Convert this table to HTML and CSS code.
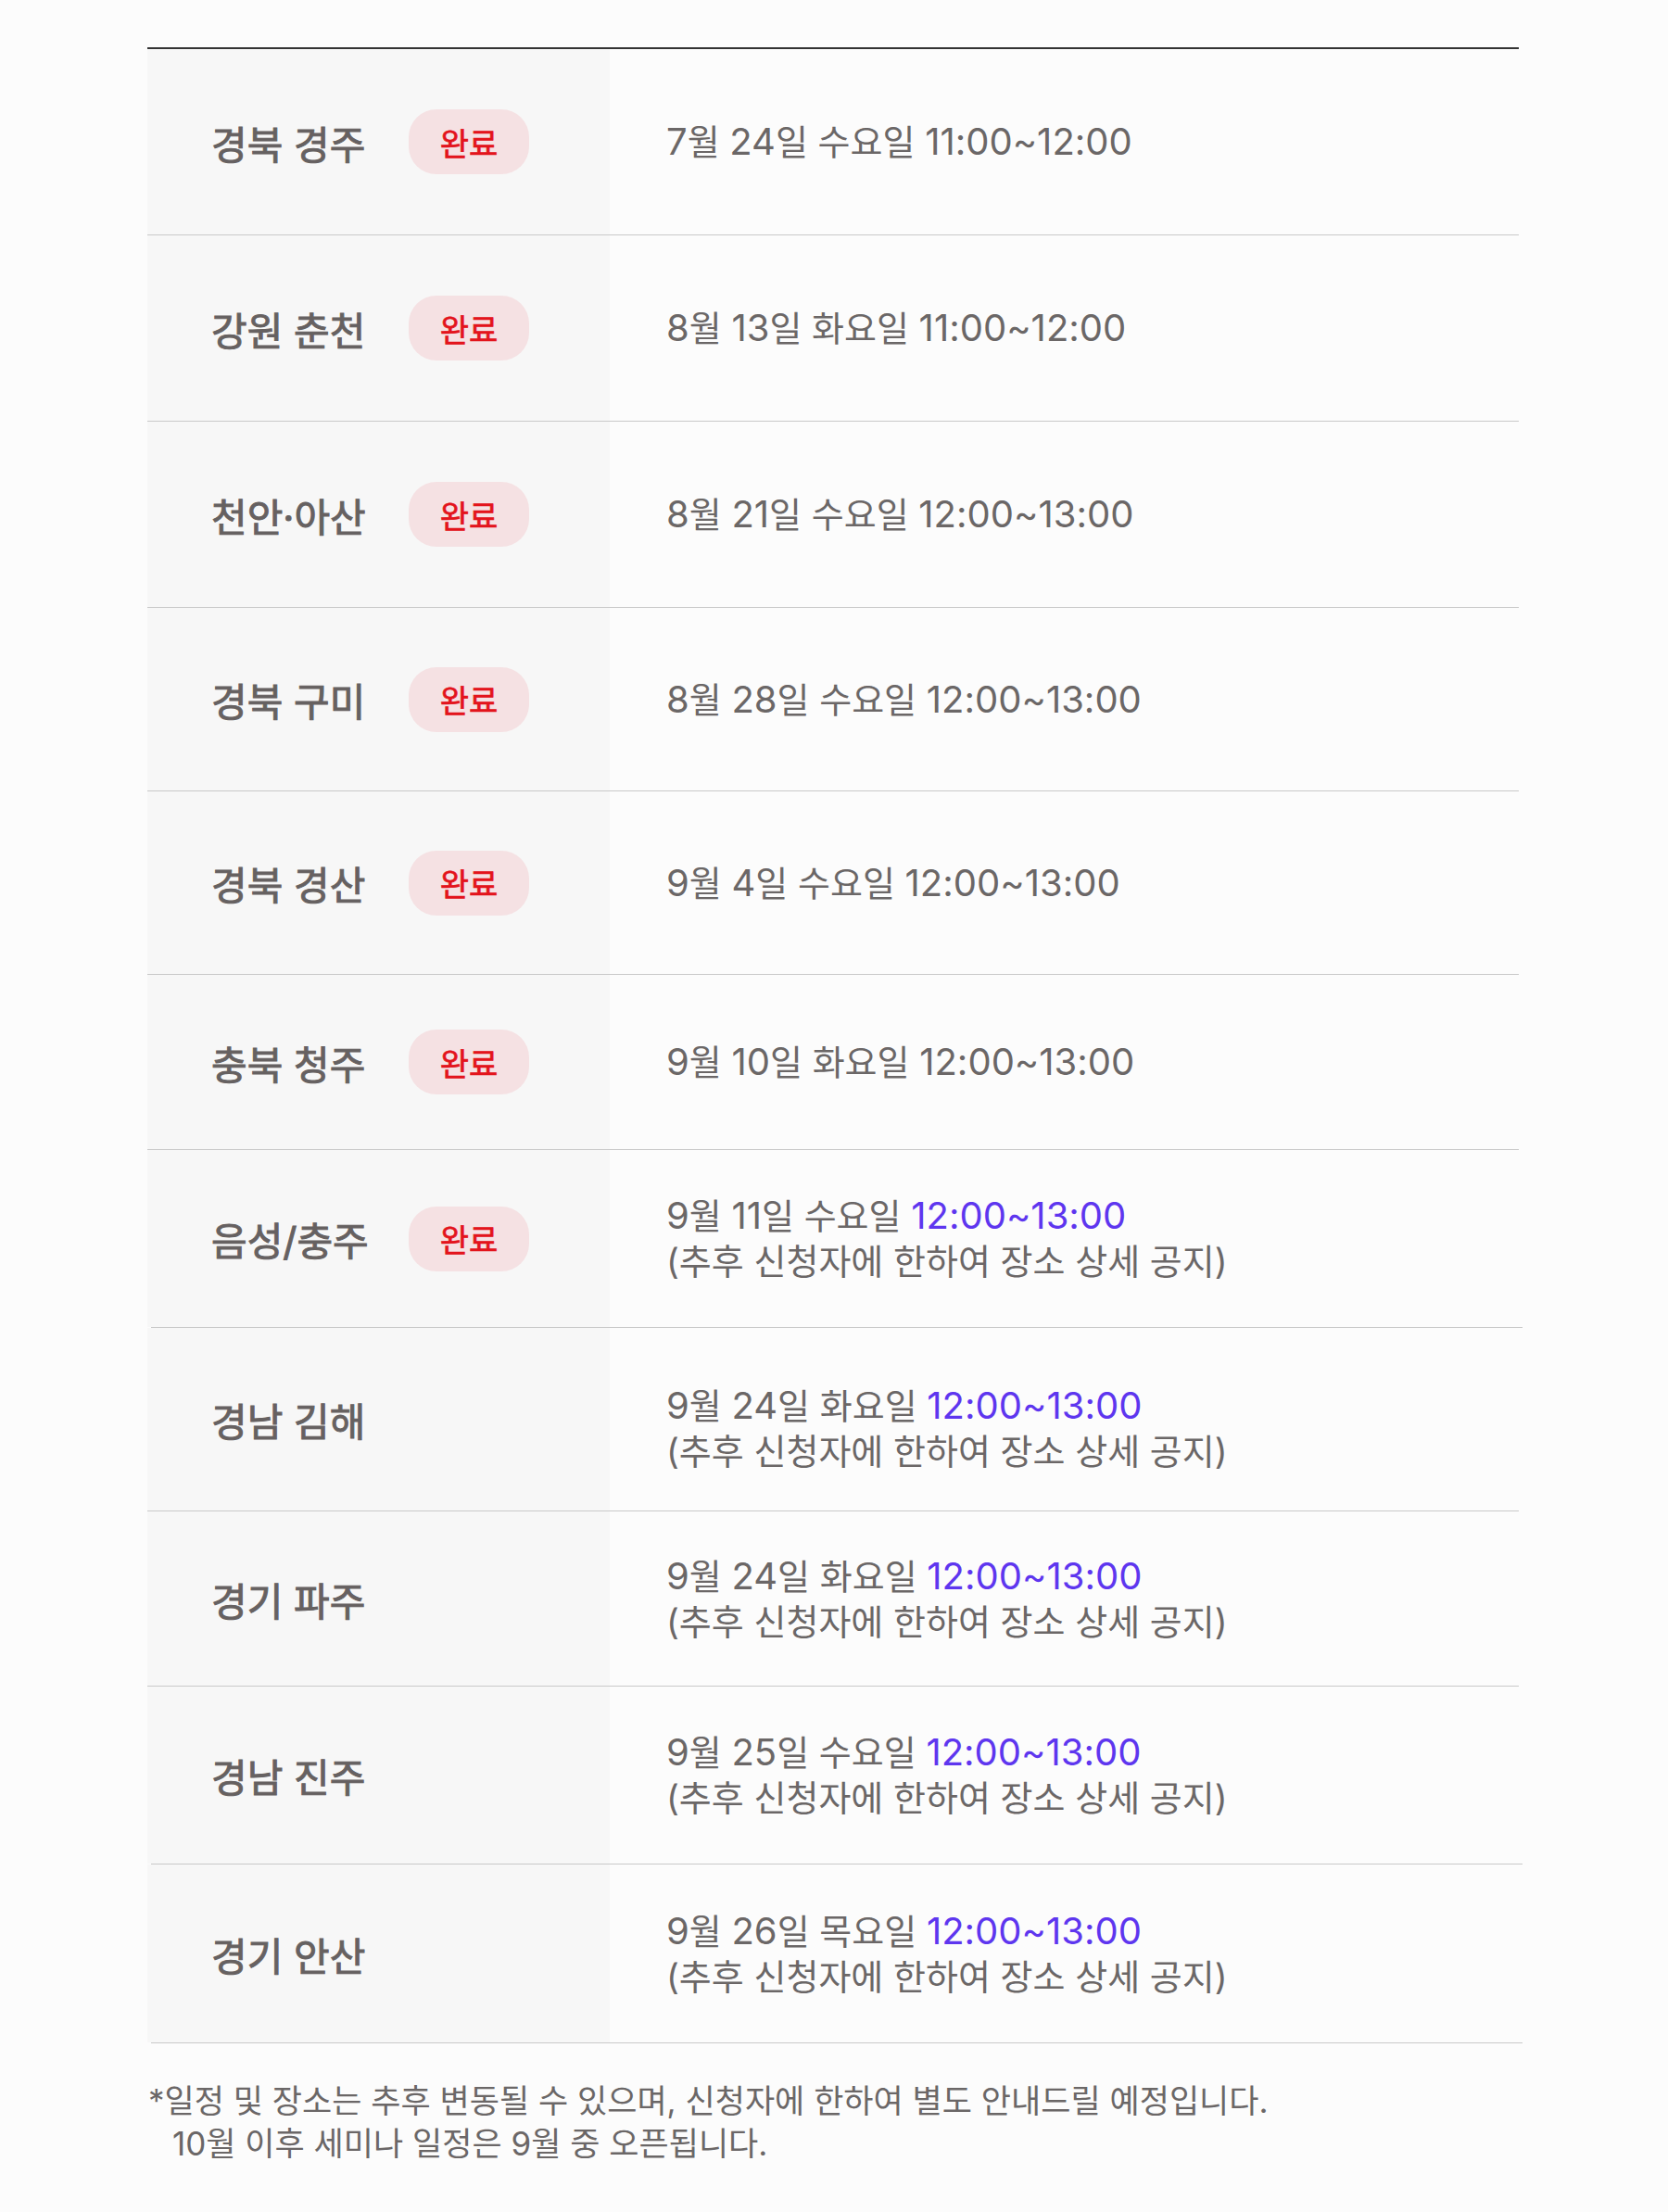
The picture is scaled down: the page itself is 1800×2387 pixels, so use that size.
FILE: index.html
```html
<!DOCTYPE html>
<html lang="ko">
<head>
<meta charset="utf-8">
<title>세미나 일정</title>
<link rel="stylesheet" href="styles.css">
</head>
<body>
<div class="page">
  <div class="table">
    <div class="row r1">
      <div class="place"><span class="name">경북 경주</span><span class="badge">완료</span></div>
      <div class="date"><p><span class="n">7</span>월 <span class="n">24</span>일 수요일 <span class="n">11:00~12:00</span></p></div>
    </div>
    <div class="row r2">
      <div class="place"><span class="name">강원 춘천</span><span class="badge">완료</span></div>
      <div class="date"><p><span class="n">8</span>월 <span class="n">13</span>일 화요일 <span class="n">11:00~12:00</span></p></div>
    </div>
    <div class="row r3">
      <div class="place"><span class="name">천안·아산</span><span class="badge">완료</span></div>
      <div class="date"><p><span class="n">8</span>월 <span class="n">21</span>일 수요일 <span class="n">12:00~13:00</span></p></div>
    </div>
    <div class="row r4">
      <div class="place"><span class="name">경북 구미</span><span class="badge">완료</span></div>
      <div class="date"><p><span class="n">8</span>월 <span class="n">28</span>일 수요일 <span class="n">12:00~13:00</span></p></div>
    </div>
    <div class="row r5">
      <div class="place"><span class="name">경북 경산</span><span class="badge">완료</span></div>
      <div class="date"><p><span class="n">9</span>월 <span class="n">4</span>일 수요일 <span class="n">12:00~13:00</span></p></div>
    </div>
    <div class="row r6">
      <div class="place"><span class="name">충북 청주</span><span class="badge">완료</span></div>
      <div class="date"><p><span class="n">9</span>월 <span class="n">10</span>일 화요일 <span class="n">12:00~13:00</span></p></div>
    </div>
    <div class="row r7 shifted">
      <div class="place"><span class="name">음성/충주</span><span class="badge">완료</span></div>
      <div class="date"><p><span class="n">9</span>월 <span class="n">11</span>일 수요일 <span class="n time">12:00~13:00</span></p><p>(추후 신청자에 한하여 장소 상세 공지)</p></div>
    </div>
    <div class="row r8">
      <div class="place"><span class="name">경남 김해</span></div>
      <div class="date lowered"><p><span class="n">9</span>월 <span class="n">24</span>일 화요일 <span class="n time">12:00~13:00</span></p><p>(추후 신청자에 한하여 장소 상세 공지)</p></div>
    </div>
    <div class="row r9">
      <div class="place"><span class="name">경기 파주</span></div>
      <div class="date"><p><span class="n">9</span>월 <span class="n">24</span>일 화요일 <span class="n time">12:00~13:00</span></p><p>(추후 신청자에 한하여 장소 상세 공지)</p></div>
    </div>
    <div class="row r10 shifted">
      <div class="place"><span class="name">경남 진주</span></div>
      <div class="date"><p><span class="n">9</span>월 <span class="n">25</span>일 수요일 <span class="n time">12:00~13:00</span></p><p>(추후 신청자에 한하여 장소 상세 공지)</p></div>
    </div>
    <div class="row r11 shifted">
      <div class="place"><span class="name">경기 안산</span></div>
      <div class="date"><p><span class="n">9</span>월 <span class="n">26</span>일 목요일 <span class="n time">12:00~13:00</span></p><p>(추후 신청자에 한하여 장소 상세 공지)</p></div>
    </div>
  </div>
  <div class="note">
    <p>*일정 및 장소는 추후 변동될 수 있으며, 신청자에 한하여 별도 안내드릴 예정입니다.</p>
    <p class="indent">10월 이후 세미나 일정은 9월 중 오픈됩니다.</p>
  </div>
</div>
</body>
</html>
```

FILE: styles.css
```css
html, body {
  margin: 0;
  padding: 0;
  background: #fcfcfc;
}

body {
  font-family: "Inter", "Noto Sans CJK KR", sans-serif;
  color: #6b6767;
}

p {
  margin: 0;
}

.page {
  padding: 51px 161px 0 159px;
}

.table {
  border-top: 2px solid #333333;
}

.row {
  display: flex;
  position: relative;
  border-bottom: 1px solid #c9c9c9;
}

.row.shifted {
  border-bottom-color: transparent;
}

.row.shifted::after {
  content: "";
  position: absolute;
  left: 4px;
  right: -4px;
  bottom: -1px;
  height: 1px;
  background: #c9c9c9;
}

.r1, .r2, .r3 { height: 200px; }
.r4, .r5, .r8 { height: 197px; }
.r6, .r9 { height: 188px; }
.r7, .r10 { height: 191px; }
.r11 { height: 192px; }

.place {
  width: 430px;
  flex: none;
  background: #f7f7f7;
  display: flex;
  align-items: center;
  padding-left: 69px;
}

.name {
  width: 213px;
  flex: none;
  font-size: 42px;
  font-weight: 400;
  color: #666161;
  -webkit-text-stroke: 1px #666161;
  white-space: nowrap;
}

.badge {
  width: 130px;
  height: 70px;
  border-radius: 30px;
  background: #f5e1e3;
  color: #e3141c;
  font-size: 34px;
  font-weight: 400;
  -webkit-text-stroke: 0.7px #e3141c;
  display: flex;
  align-items: center;
  justify-content: center;
}

.date {
  flex: 1;
  display: flex;
  flex-direction: column;
  justify-content: center;
  padding-left: 61px;
  font-size: 38px;
  line-height: 49px;
  font-weight: 400;
}

.date.lowered {
  padding-top: 20px;
}

.n {
  font-size: 40px;
}

.time {
  color: #5e36ef;
}

.note {
  padding-top: 39px;
  font-size: 35px;
  line-height: 46px;
  padding-left: 1px;
}

.indent {
  padding-left: 26px;
}
```
